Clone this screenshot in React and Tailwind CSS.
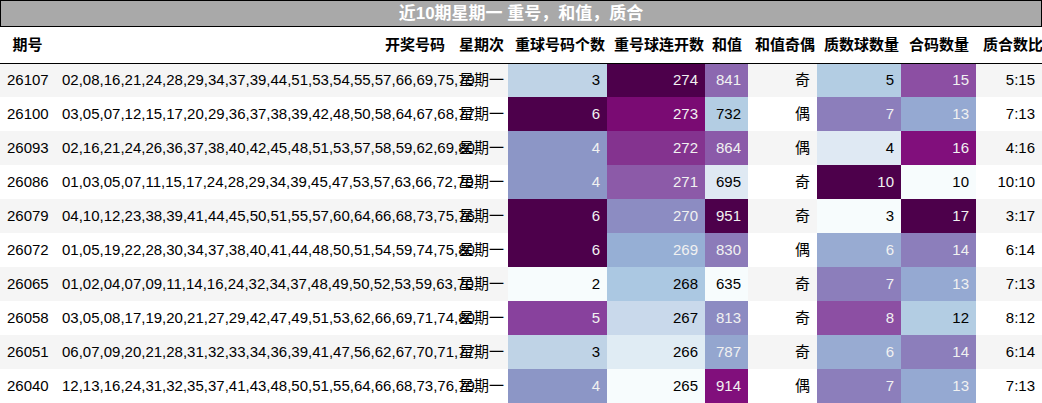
const rows=[
["26107","02,08,16,21,24,28,29,34,37,39,44,51,53,54,55,57,66,69,75,79",3,274,841,"奇",5,15,"5:15"],
["26100","03,05,07,12,15,17,20,29,36,37,38,39,42,48,50,58,64,67,68,77",6,273,732,"偶",7,13,"7:13"],
["26093","02,16,21,24,26,36,37,38,40,42,45,48,51,53,57,58,59,62,69,80",4,272,864,"偶",4,16,"4:16"],
["26086","01,03,05,07,11,15,17,24,28,29,34,39,45,47,53,57,63,66,72,79",4,271,695,"奇",10,10,"10:10"],
["26079","04,10,12,23,38,39,41,44,45,50,51,55,57,60,64,66,68,73,75,76",6,270,951,"奇",3,17,"3:17"],
["26072","01,05,19,22,28,30,34,37,38,40,41,44,48,50,51,54,59,74,75,80",6,269,830,"偶",6,14,"6:14"],
["26065","01,02,04,07,09,11,14,16,24,32,34,37,48,49,50,52,53,59,63,70",2,268,635,"奇",7,13,"7:13"],
["26058","03,05,08,17,19,20,21,27,29,42,47,49,51,53,62,66,69,71,74,80",5,267,813,"奇",8,12,"8:12"],
["26051","06,07,09,20,21,28,31,32,33,34,36,39,41,47,56,62,67,70,71,77",3,266,787,"奇",6,14,"6:14"],
["26040","12,13,16,24,31,32,35,37,41,43,48,50,51,55,64,66,68,73,76,79",4,265,914,"偶",7,13,"7:13"],
];
const c1={2:"#f7fcfd",3:"#bfd3e6",4:"#8c96c6",5:"#88419d",6:"#4d004b"};
const c2={274:"#4d004b",273:"#7a0b73",272:"#84338f",271:"#8c5aa8",270:"#8c8cc2",269:"#96afd5",268:"#abc8e2",267:"#c9d9eb",266:"#e0ecf4",265:"#f7fcfd"};
const c3={841:"#8c68b0",732:"#b3cde3",864:"#8b5aa9",695:"#dfe9f3",951:"#4d004b",830:"#8c7bb9",635:"#f7fcfd",813:"#8c8bc2",787:"#94a6cf",914:"#810f7c"};
const c4={3:"#f7fcfd",4:"#dfe9f3",5:"#b3cde3",6:"#98abd2",7:"#8c7ebb",8:"#8c4fa3",10:"#4d004b"};
const c5={10:"#f7fcfd",12:"#b3cde3",13:"#95a9d2",14:"#8c7ebb",15:"#8c4fa3",16:"#810f7c",17:"#4d004b"};
const light=new Set(["#f7fcfd","#bfd3e6","#c9d9eb","#e0ecf4","#b3cde3","#dfe9f3","#abc8e2"]);
function Cell({v,bg}){return <td className="px-[7px] text-right whitespace-nowrap" style={{background:bg,color:light.has(bg)?"#000":"#f1f1f1"}}>{v}</td>}
export default function App(){
return <div className="w-[1042px] h-[403px] bg-white overflow-hidden text-[15px] text-black" style={{fontFamily:'"Liberation Sans","Noto Sans CJK SC",sans-serif'}}>
<div className="h-[27px] bg-[#a9a9a9] border border-black text-white text-[17px] font-bold flex items-center justify-center">近10期星期一 重号，和值，质合</div>
<table className="w-[1042px] border-collapse table-fixed">
<colgroup><col className="w-[55px]"/><col className="w-[397px]"/><col className="w-[56px]"/><col className="w-[99px]"/><col className="w-[98px]"/><col className="w-[43px]"/><col className="w-[69px]"/><col className="w-[84px]"/><col className="w-[75px]"/><col className="w-[66px]"/></colgroup>
<thead><tr className="h-[36px] border-b border-black font-bold text-right whitespace-nowrap">
<th className="text-center">期号</th><th className="px-[7px]">开奖号码</th><th className="px-[7px]">星期次</th>
<th className="px-[7px]">重球号码个数</th><th className="px-[7px]">重号球连开数</th><th className="px-[7px]">和值</th><th className="px-[7px]">和值奇偶</th><th className="px-[7px]">质数球数量</th><th className="px-[7px]">合码数量</th><th className="px-[7px]">质合数比</th>
</tr></thead>
<tbody>{rows.map((r,i)=><tr key={r[0]} className={"h-[34px] "+(i%2===0?"bg-[#f5f5f5]":"bg-white")}>
<td className="pl-[7px] whitespace-nowrap">{r[0]}</td><td className="px-[7px] text-right whitespace-nowrap">{r[1]}</td><td className="px-[7px] text-right whitespace-nowrap">星期一</td>
<Cell v={r[2]} bg={c1[r[2]]}/><Cell v={r[3]} bg={c2[r[3]]}/><Cell v={r[4]} bg={c3[r[4]]}/>
<td className="px-[7px] text-right">{r[5]}</td>
<Cell v={r[6]} bg={c4[r[6]]}/><Cell v={r[7]} bg={c5[r[7]]}/>
<td className="px-[7px] text-right whitespace-nowrap">{r[8]}</td></tr>)}</tbody>
</table></div>}
